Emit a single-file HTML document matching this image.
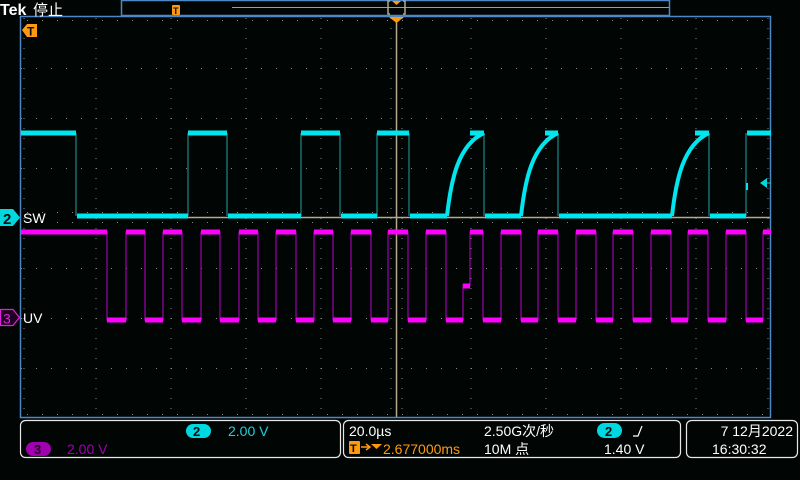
<!DOCTYPE html>
<html><head><meta charset="utf-8"><style>
html,body{margin:0;padding:0;background:#010604;width:800px;height:480px;overflow:hidden}
svg{display:block}
text{font-family:"Liberation Sans","Noto Sans CJK SC",sans-serif}
</style></head><body>
<svg width="800" height="480" viewBox="0 0 800 480" xmlns="http://www.w3.org/2000/svg">
<rect width="800" height="480" fill="#010604"/>
<g stroke="#8a8a8a" stroke-width="1" stroke-dasharray="1 9" fill="none">
<path d="M96 18V418M171 18V418M246 18V418M321 18V418M471 18V418M546 18V418M621 18V418M696 18V418"/>
<path d="M21 68.5H771M21 118.5H771M21 168.5H771M21 268.5H771M21 318.5H771M21 368.5H771" stroke-dasharray="1 14"/>
</g>
<g stroke="#8a8a8a" stroke-width="1" fill="none">
<path d="M21 20.5H771M21 414.5H771" stroke-dasharray="1 14" transform="translate(6 0)"/>
<path d="M24 18V418M768 18V418" stroke-dasharray="1 9"/>
<path d="M391 18V418M402 18V418" stroke-dasharray="1 9"/>
<path d="M21 212.5H771M21 222.5H771" stroke-dasharray="1 14" transform="translate(6 0)"/>
</g>
<line x1="396.5" y1="22" x2="396.5" y2="418" stroke="#b8a890" stroke-width="1.5"/>
<line x1="130" y1="217.5" x2="771" y2="217.5" stroke="#b8a890" stroke-width="1.5"/>
<rect x="20.5" y="16.5" width="750" height="401" fill="none" stroke="#4f86c6" stroke-width="1.5"/>
<path fill="none" stroke="#1a8a8a" stroke-width="1.2" d="M76 133V216M188 216V133M227 133V216M301 216V133M340 133V216M377 216V133M409 133V216M484 133V216M558 133V216M709 133V216M746 216V133"/>
<g stroke="#00e6ee" stroke-width="5" fill="none">
<path d="M21 133H76M188 133H227M301 133H340M377 133H409M470 133H484M545 133H558M695 133H709M747 133H771"/>
<path d="M77 216H188M228 216H301M341 216H377M410 216H447M485 216H521M559 216H672M710 216H746"/>
<path d="M447 216C451 180 458 145 484 133M521 216C525 180 532 145 558 133M672 216C676 180 683 145 709 133" stroke-width="4"/>
<path d="M747 183V190" stroke-width="2"/>
</g>
<polyline fill="none" stroke="#a000b0" stroke-width="1.2" points="21,232 107,232 107,320 126,320 126,232 145,232 145,320 163,320 163,232 182,232 182,320 201,320 201,232 220,232 220,320 239,320 239,232 258,232 258,320 276,320 276,232 296,232 296,320 314,320 314,232 333,232 333,320 351,320 351,232 371,232 371,320 388,320 388,232 408,232 408,320 426,320 426,232 446,232 446,320 463,320 463,285 470,285 470,232 483,232 483,320 501,320 501,232 521,232 521,320 538,320 538,232 558,232 558,320 576,320 576,232 596,232 596,320 613,320 613,232 633,232 633,320 651,320 651,232 671,232 671,320 688,320 688,232 708,232 708,320 726,320 726,232 746,232 746,320 763,320 763,232 771,232"/>
<g stroke="#ff00ff" stroke-width="5" fill="none">
<path d="M21 232H107M126 232H145M163 232H182M201 232H220M239 232H258M276 232H296M314 232H333M351 232H371M388 232H408M426 232H446M470 232H483M501 232H521M538 232H558M576 232H596M613 232H633M651 232H671M688 232H708M726 232H746M763 232H771"/>
<path d="M107 320H126M145 320H163M182 320H201M220 320H239M258 320H276M296 320H314M333 320H351M371 320H388M408 320H426M446 320H463M483 320H501M521 320H538M558 320H576M596 320H613M633 320H651M671 320H688M708 320H726M746 320H763M463 286H470"/>
</g>
<path d="M0 209H13L20 217.5L13 226H0Z" fill="#00d8e0"/>
<text x="3" y="224" font-size="15" font-weight="bold" fill="#001010">2</text>
<text x="23" y="223" font-size="14" fill="#ffffff">SW</text>
<path d="M0.5 309.5H13L19.5 317.5L13 325.5H0.5Z" fill="#200020" stroke="#e020e0" stroke-width="1.2"/>
<text x="3" y="323.5" font-size="14" fill="#e020e0">3</text>
<text x="23" y="323" font-size="14" fill="#ffffff">UV</text>
<path d="M760 183L767 178V188Z" fill="#00d8e0"/><line x1="766" y1="183" x2="771" y2="183" stroke="#00d8e0"/>
<path d="M22 30L27 24H37V37H27Z" fill="#ff9a10"/>
<text x="27" y="35.5" font-size="12" font-weight="bold" fill="#101010">T</text>
<path d="M389 17H404L396.5 23Z" fill="#ff9a10"/>
<text x="0" y="15" font-size="16" font-weight="bold" fill="#ffffff" font-family="Liberation Serif,serif">Tek</text>
<text x="33" y="15" font-size="15" fill="#ffffff">停止</text>
<rect x="121.5" y="0.5" width="548" height="15" fill="none" stroke="#4f86c6" stroke-width="1.5"/>
<line x1="232" y1="7.5" x2="669" y2="7.5" stroke="#20d0d8" stroke-width="1"/>
<rect x="172" y="5" width="8" height="10" rx="1" fill="#ff9a10"/>
<text x="173" y="14" font-size="9" font-weight="bold" fill="#101010">T</text>
<path d="M390 1H388V14H390M403 1H405V14H403" fill="none" stroke="#b0a890" stroke-width="1.5"/>
<path d="M392 1H401L396.5 5Z" fill="#ff9a10"/>
<rect x="20.5" y="420.5" width="320" height="37" rx="5" fill="none" stroke="#e8e8e8" stroke-width="1.2"/>
<rect x="343.5" y="420.5" width="337" height="37" rx="5" fill="none" stroke="#e8e8e8" stroke-width="1.2"/>
<rect x="686.5" y="420.5" width="111" height="37" rx="5" fill="none" stroke="#e8e8e8" stroke-width="1.2"/>
<rect x="186" y="424" width="25" height="14" rx="7" fill="#00d8e0"/>
<text x="193" y="436" font-size="13" font-weight="bold" fill="#001010">2</text>
<text x="228" y="436" font-size="14" fill="#20d0d8">2.00 V</text>
<rect x="26" y="442" width="25" height="14" rx="7" fill="#a000b0"/>
<text x="34" y="454" font-size="13" font-weight="bold" fill="#200020">3</text>
<text x="67" y="454" font-size="14" fill="#a000b0">2.00 V</text>
<text x="349" y="436" font-size="14" fill="#ffffff">20.0µs</text>
<rect x="349" y="441" width="11" height="13" rx="1" fill="#ff9a10"/>
<text x="350" y="452" font-size="11" font-weight="bold" fill="#101010">T</text>
<path d="M361 447H369M366 444L370 447L366 450" stroke="#ff9a10" stroke-width="1.5" fill="none"/>
<path d="M371 444H382L376.5 449Z" fill="#ff9a10"/>
<text x="383" y="454" font-size="14" fill="#ff9a10">2.677000ms</text>
<text x="484" y="436" font-size="14" fill="#ffffff">2.50G次/秒</text>
<text x="484" y="454" font-size="14" fill="#ffffff">10M 点</text>
<rect x="597" y="423" width="25" height="15" rx="7.5" fill="#00d8e0"/>
<text x="605" y="436" font-size="13" font-weight="bold" fill="#001010">2</text>
<path d="M633 436L638 436L642 426" stroke="#ffffff" stroke-width="1.2" fill="none"/>
<text x="604" y="454" font-size="14" fill="#ffffff">1.40 V</text>
<text x="793" y="436" font-size="14" fill="#ffffff" text-anchor="end">7 12月2022</text>
<text x="712" y="454" font-size="14" fill="#ffffff">16:30:32</text>
</svg>
</body></html>
